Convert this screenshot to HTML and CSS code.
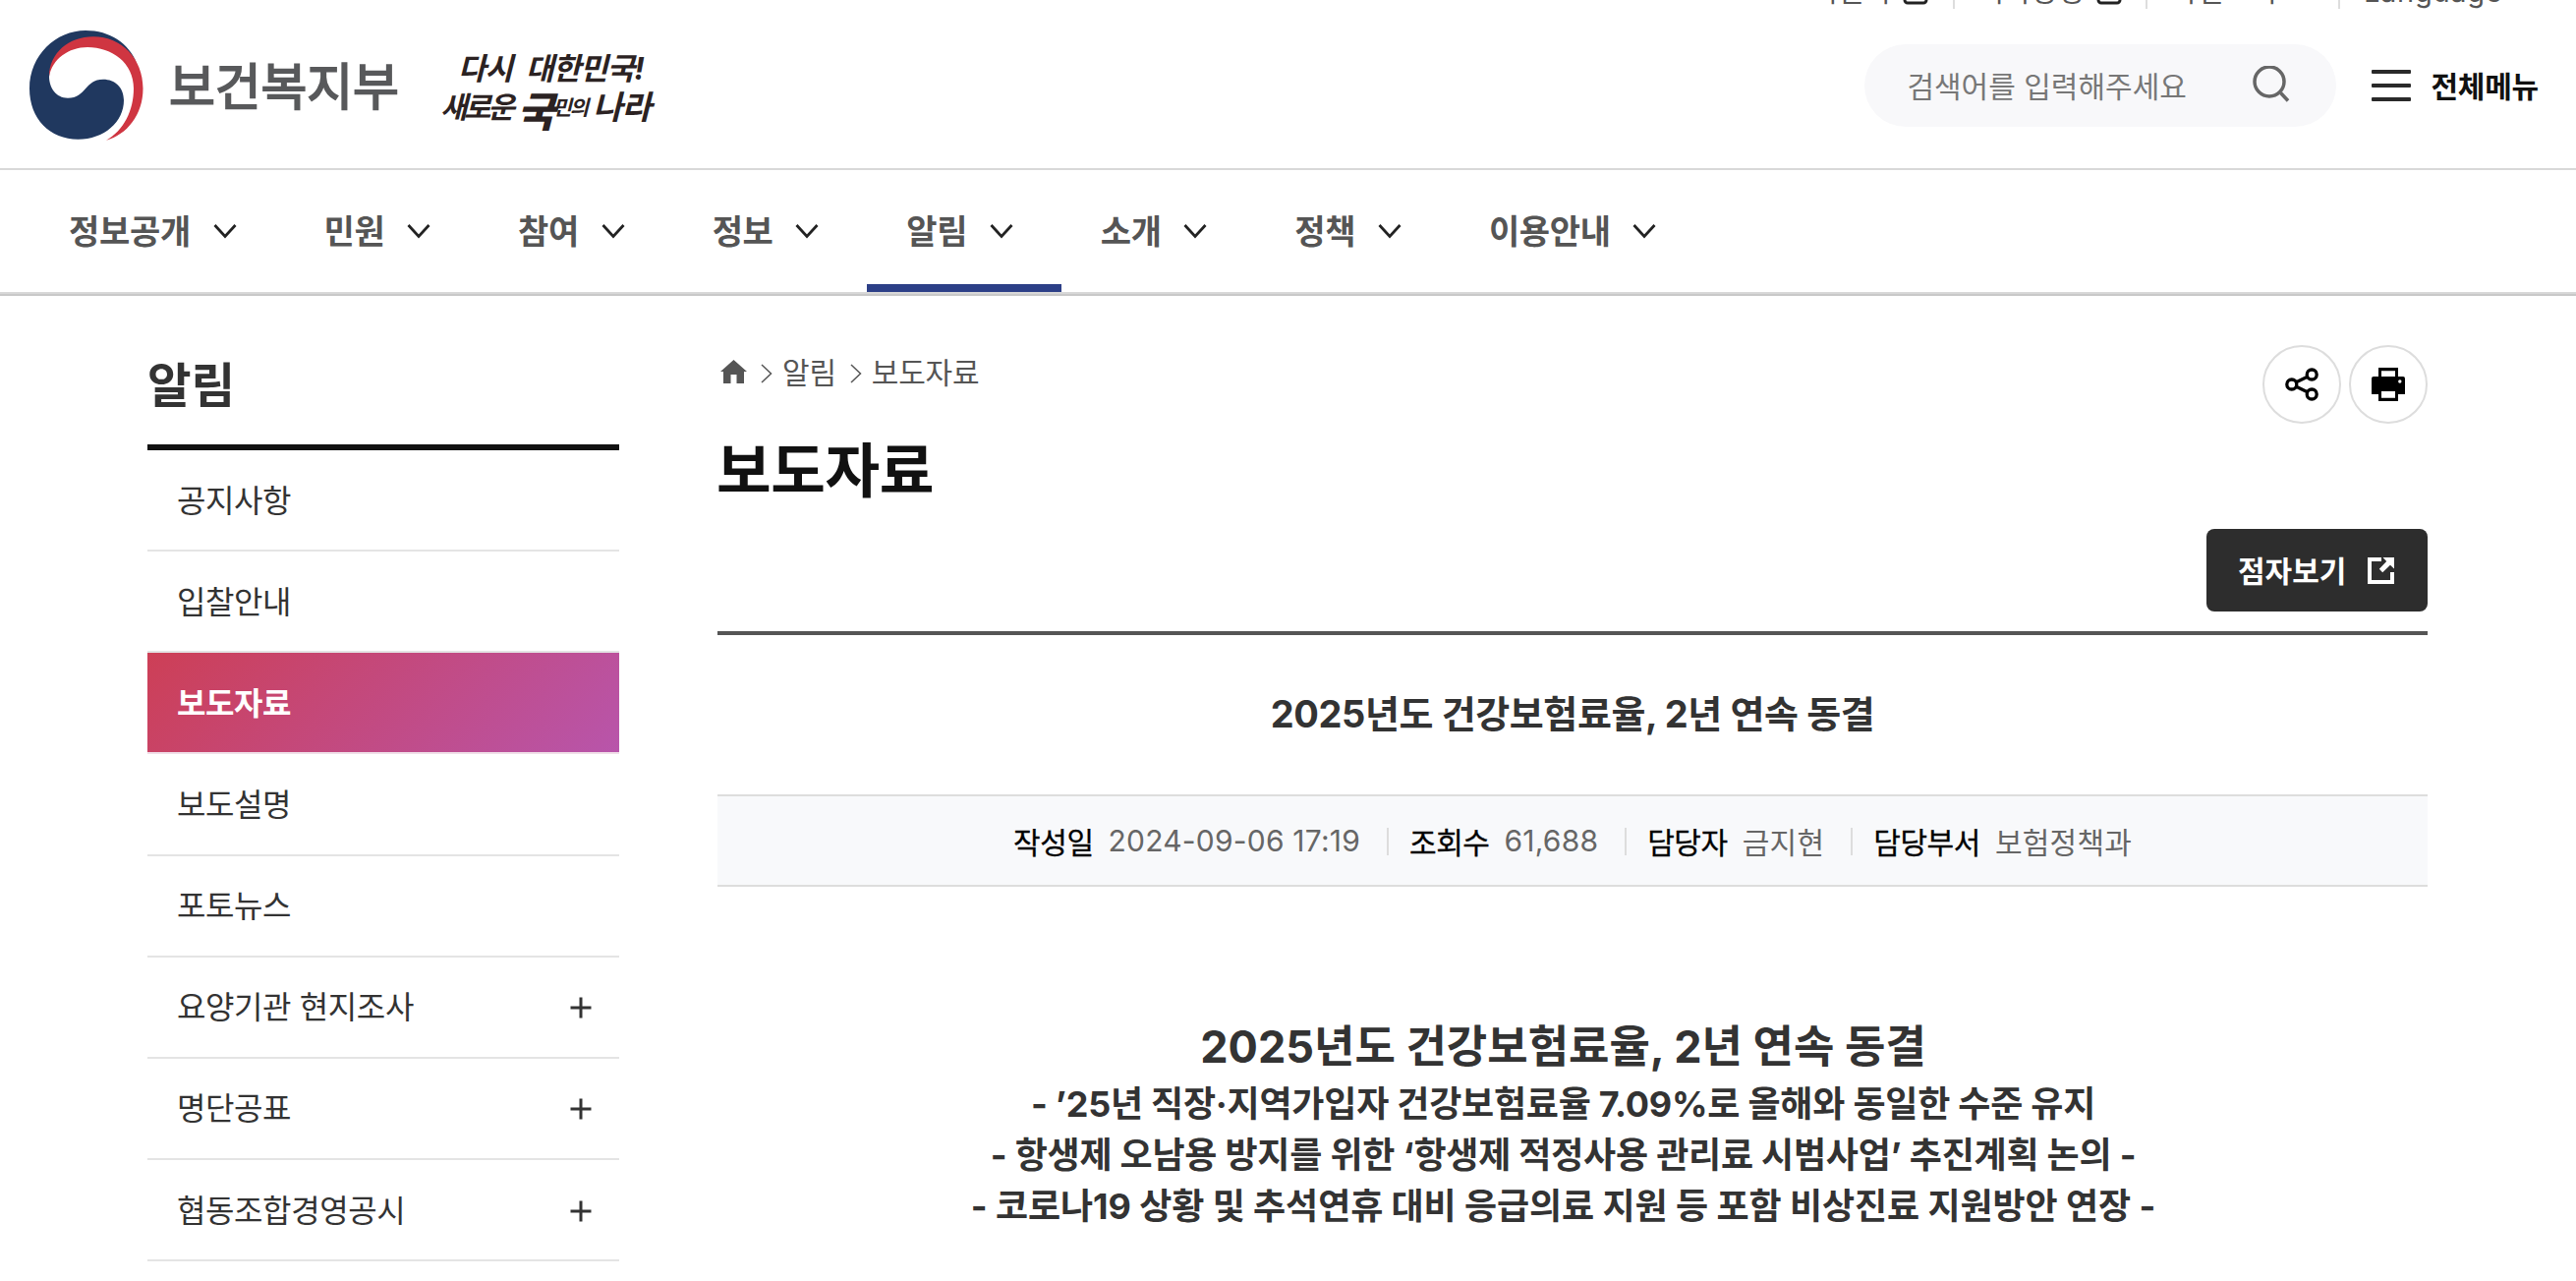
FILE: index.html
```html
<!DOCTYPE html>
<html lang="ko">
<head>
    <meta charset="UTF-8">
    <meta name="viewport" content="width=device-width, initial-scale=1.0">
    <title>보도자료 | 보건복지부</title>
    <link rel="stylesheet" href="styles.css">
</head>
<body>
    <svg class="sprite" width="0" height="0">
        <symbol id="arrow-down" viewBox="0 0 24 24">
            <path d="M1.5 6 L12 17.5 L22.5 6" fill="none" stroke="#222" stroke-width="2.8"/>
        </symbol>
        <symbol id="arrow-right" viewBox="0 0 12 20">
            <path d="M1 1 L10.5 10 L1 19" fill="none" stroke="#555" stroke-width="1.5"/>
        </symbol>
        <symbol id="plus" viewBox="0 0 22 22">
            <path d="M11 0.5 V21.5 M0.5 11 H21.5" fill="none" stroke="#333" stroke-width="3"/>
        </symbol>
        <symbol id="box" viewBox="0 0 26 26">
            <path d="M12 2 H5 a3 3 0 0 0 -3 3 V21 a3 3 0 0 0 3 3 H21 a3 3 0 0 0 3 -3 V14" fill="none" stroke="#222" stroke-width="3"/>
        </symbol>
    </svg>

    <header class="header">
        <ul class="util">
            <li class="first">어린이 <svg><use href="#box"/></svg></li>
            <li>국가상징 <svg><use href="#box"/></svg></li>
            <li>화면크기</li>
            <li class="lang">Language</li>
        </ul>

        <div class="brand">
            <svg class="emblem" viewBox="30 31 116 112">
                <path fill="#20385f" d="M87 31 C57 31 30 56 30 90 C30 121 51 141.7 79.5 141.7 C106 141.7 126 124 126 102 C126 89 117 80.7 105 80.7 C86 80.7 88 99.7 69 99.7 C57 99.7 50 89 50 78 C52 54 72 38 95 38 C115 38 129 48 139 64 C131 44 112 31 87 31Z"/>
                <path fill="#cf3541" d="M50 78 C50 54 70 37.3 95 37.3 C124 37.3 145.5 60 145.5 90 C145.5 117 129 137 108 142.7 C126 133 136 112 136 90 C136 64 114 48 89 48 C70 48 53 60 50 78Z"/>
            </svg>
            <span class="brand-name">보건복지부</span>
            <div class="slogan">
                <p class="slogan-top"><span>다시</span><span>대한민국!</span></p>
                <p class="slogan-bottom"><span>새로운</span><b>국</b><small>민의</small><span>나라</span></p>
            </div>
        </div>

        <div class="tools">
            <div class="search">
                <span>검색어를 입력해주세요</span>
                <svg viewBox="0 0 38 38">
                    <circle cx="17" cy="16" r="15" fill="none" stroke="#666" stroke-width="3.5"/>
                    <path d="M28.5 27.5 L36 35.5" stroke="#666" stroke-width="3.5"/>
                </svg>
            </div>
            <div class="all-menu">
                <span class="bars"><i></i><i></i><i></i></span>
                <strong>전체메뉴</strong>
            </div>
        </div>
    </header>

    <nav class="gnb">
        <a>정보공개 <svg><use href="#arrow-down"/></svg></a>
        <a>민원 <svg><use href="#arrow-down"/></svg></a>
        <a>참여 <svg><use href="#arrow-down"/></svg></a>
        <a>정보 <svg><use href="#arrow-down"/></svg></a>
        <a class="on">알림 <svg><use href="#arrow-down"/></svg></a>
        <a>소개 <svg><use href="#arrow-down"/></svg></a>
        <a>정책 <svg><use href="#arrow-down"/></svg></a>
        <a>이용안내 <svg><use href="#arrow-down"/></svg></a>
    </nav>

    <div class="container">
        <aside class="side">
            <h2>알림</h2>
            <ul>
                <li>공지사항</li>
                <li>입찰안내</li>
                <li class="on">보도자료</li>
                <li>보도설명</li>
                <li>포토뉴스</li>
                <li>요양기관 현지조사 <svg><use href="#plus"/></svg></li>
                <li>명단공표 <svg><use href="#plus"/></svg></li>
                <li>협동조합경영공시 <svg><use href="#plus"/></svg></li>
            </ul>
        </aside>

        <main class="content">
            <div class="page-head">
                <div>
                    <div class="breadcrumb">
                        <svg class="home" viewBox="0 0 27 24">
                            <path fill="#555" d="M13.5 0 L27 12 H24 V24 H16.5 V15 H10.5 V24 H3 V12 H0Z"/>
                        </svg>
                        <svg class="sep"><use href="#arrow-right"/></svg>
                        <span>알림</span>
                        <svg class="sep"><use href="#arrow-right"/></svg>
                        <span>보도자료</span>
                    </div>
                    <h1>보도자료</h1>
                </div>
                <div class="actions">
                    <button class="round">
                        <svg viewBox="0 0 34 34" fill="none" stroke="#000" stroke-width="3.3">
                            <circle cx="6.8" cy="17" r="5"/>
                            <circle cx="27.2" cy="7" r="5"/>
                            <circle cx="27.2" cy="27" r="5"/>
                            <path d="M11.3 14.8 L22.7 9.2 M11.3 19.2 L22.7 24.8"/>
                        </svg>
                    </button>
                    <button class="round">
                        <svg viewBox="0 0 34 34">
                            <path fill="#000" fill-rule="evenodd" d="M7 0 H27 V9 H32 Q34 9 34 11 V27 H27 V34 H7 V27 H0 V11 Q0 9 2 9 H7Z M10 3.3 V9 H24 V3.3Z M10 24 V30.7 H24 V24Z"/>
                            <circle cx="28.8" cy="14" r="1.7" fill="#fff"/>
                        </svg>
                    </button>
                </div>
            </div>

            <div class="btn-row">
                <button class="braille">점자보기
                    <svg viewBox="0 0 27 27">
                        <path d="M14 2 H2 V25 H25 V15" fill="none" stroke="#fff" stroke-width="4"/>
                        <path d="M15.5 0 H27 V11.5 L23 7.8 L15.2 15.2 L11.8 11.8 L19.2 4Z" fill="#fff"/>
                    </svg>
                </button>
            </div>

            <article class="article">
                <h3>2025년도 건강보험료율, 2년 연속 동결</h3>
                <dl class="meta">
                    <div><dt>작성일</dt><dd>2024-09-06 17:19</dd></div>
                    <div><dt>조회수</dt><dd>61,688</dd></div>
                    <div><dt>담당자</dt><dd>금지현</dd></div>
                    <div><dt>담당부서</dt><dd>보험정책과</dd></div>
                </dl>
                <div class="article-body">
                    <p class="lead">2025년도 건강보험료율, 2년 연속 동결</p>
                    <p>- ’25년 직장·지역가입자 건강보험료율 7.09%로 올해와 동일한 수준 유지</p>
                    <p>- 항생제 오남용 방지를 위한 ‘항생제 적정사용 관리료 시범사업’ 추진계획 논의 -</p>
                    <p class="wide">- 코로나19 상황 및 추석연휴 대비 응급의료 지원 등 포함 비상진료 지원방안 연장 -</p>
                </div>
            </article>
        </main>
    </div>
</body>
</html>
```
FILE: styles.css
```css
* {
    margin: 0;
    padding: 0;
    box-sizing: border-box;
}

body {
    font-family: Inter, "Noto Sans CJK KR", sans-serif;
    background: #fff;
    color: #333;
    height: 1303px;
    overflow: hidden;
}

ul {
    list-style: none;
}

svg {
    display: block;
    flex-shrink: 0;
}

.sprite {
    position: absolute;
}

button {
    font-family: inherit;
    cursor: pointer;
}

/* header */
.header {
    position: relative;
    height: 173px;
    border-bottom: 2px solid #d8d8d8;
    display: flex;
    justify-content: space-between;
    padding: 0 38px 0 30px;
}

.util {
    position: absolute;
    top: -28px;
    right: 77px;
    display: flex;
    font-size: 29px;
    line-height: 40px;
    letter-spacing: 0.3px;
    color: #555;
}

.util li {
    width: 196px;
    display: flex;
    align-items: center;
    white-space: nowrap;
}

.util li.first {
    width: auto;
    padding-right: 25px;
}

.util li.lang {
    width: 165px;
    letter-spacing: 0.7px;
}

.util li + li::before {
    content: "";
    flex-shrink: 0;
    width: 2px;
    height: 20px;
    margin: 14px 24px 0 0;
    background: #ddd;
}

.util svg {
    width: 26px;
    height: 26px;
    margin-left: 12px;
}

.brand {
    display: flex;
    padding-top: 31px;
}

.emblem {
    width: 116px;
    height: 112px;
}

.brand-name {
    margin: 22px 0 0 26px;
    width: 276px;
    font-size: 51px;
    line-height: 72px;
    letter-spacing: -0.2px;
    color: #58595b;
    -webkit-text-stroke: 1.8px #58595b;
}

.slogan {
    padding-top: 16px;
    font-weight: 700;
    font-style: italic;
    color: #2b2222;
    white-space: nowrap;
}

.slogan p {
    display: flex;
    align-items: center;
    height: 40px;
}

.slogan-top {
    padding-left: 18px;
    gap: 14px;
    font-size: 31px;
    letter-spacing: -1px;
}

.slogan-bottom {
    font-size: 30px;
    letter-spacing: -3.5px;
}

.slogan b {
    margin: 6px 0 0 6px;
    font-size: 42px;
}

.slogan small {
    font-size: 21px;
    letter-spacing: -2px;
    margin: 2px 6px 0 1px;
}

.slogan-bottom span:last-child {
    font-size: 33px;
    letter-spacing: -1px;
}

.tools {
    display: flex;
    padding-top: 45px;
}

.search {
    width: 480px;
    height: 84px;
    border-radius: 42px;
    background: #f8f8fa;
    display: flex;
    align-items: center;
    justify-content: space-between;
    padding: 0 47px 3px 43px;
    font-size: 30px;
    letter-spacing: 0;
    color: #777;
}

.search svg {
    width: 38px;
    height: 38px;
}

.all-menu {
    height: 84px;
    margin-left: 36px;
    display: flex;
    align-items: center;
    font-size: 30px;
    letter-spacing: -0.2px;
    color: #111;
}

.all-menu strong {
    padding-bottom: 3px;
}

.bars {
    width: 40px;
    margin-right: 20px;
    display: grid;
    gap: 10px;
}

.bars i {
    height: 4px;
    border-radius: 1px;
    background: #2a2a2a;
}

/* main menu */
.gnb {
    height: 128px;
    padding-left: 30px;
    display: flex;
    border-bottom: 2px solid #c8c8c8;
    box-shadow: inset 0 -2px #d8d8d8;
}

.gnb a {
    height: 124px;
    padding: 0 49px 4px 40px;
    display: flex;
    align-items: center;
    font-size: 34px;
    font-weight: 700;
    letter-spacing: -0.3px;
    color: #555;
}

.gnb svg {
    width: 24px;
    height: 24px;
    margin: 4px 0 0 22.6px;
}

.gnb a.on {
    box-shadow: inset 0 -8px #2c3f87;
}

/* layout */
.container {
    width: 2320px;
    margin-left: 150px;
    display: flex;
    justify-content: space-between;
}

.side {
    width: 480px;
}

.side h2 {
    height: 157px;
    padding-top: 56px;
    border-bottom: 6px solid #111;
    font-size: 48.5px;
    line-height: 72px;
    color: #333;
}

.side li {
    height: 103.15px;
    padding: 0 28px 4px 30px;
    border-bottom: 2px solid #e4e4e4;
    display: flex;
    align-items: center;
    justify-content: space-between;
    font-size: 32px;
    letter-spacing: -0.4px;
}

.side svg {
    width: 22px;
    height: 22px;
    margin-top: 6px;
}

.side li.on {
    background: linear-gradient(135deg, #cd3f56, #b855ab) padding-box;
    border-color: #f0dfe8;
    color: #fff;
    font-weight: 700;
}

/* content */
.content {
    width: 1740px;
}

.page-head {
    height: 237px;
    padding-top: 50px;
    display: flex;
    justify-content: space-between;
}

.breadcrumb {
    height: 54px;
    display: flex;
    align-items: center;
    font-size: 30px;
    letter-spacing: -0.2px;
    color: #555;
}

.breadcrumb span {
    padding-bottom: 3px;
}

.home {
    width: 27px;
    height: 24px;
    margin-left: 3px;
}

.sep {
    width: 12px;
    height: 20px;
    margin: 4px 10px 0 14px;
}

.content h1 {
    margin: 28px 0 0 -1px;
    font-size: 60.5px;
    line-height: 92px;
    letter-spacing: -0.4px;
    color: #111;
}

.actions {
    display: flex;
    gap: 8px;
}

.round {
    width: 80px;
    height: 80px;
    border: 2px solid #ddd;
    border-radius: 50%;
    background: #fff;
    display: flex;
    align-items: center;
    justify-content: center;
}

.round svg {
    width: 34px;
    height: 34px;
}

.btn-row {
    height: 104px;
    display: flex;
    justify-content: flex-end;
}

.braille {
    width: 225px;
    height: 84px;
    border: 0;
    border-radius: 8px;
    background: #2d2d2d;
    color: #fff;
    font-size: 30px;
    font-weight: 700;
    letter-spacing: 0;
    padding: 0 34px 3px 32px;
    display: flex;
    align-items: center;
    justify-content: space-between;
}

.braille svg {
    width: 27px;
    height: 27px;
    margin-top: 3px;
}

.article {
    border-top: 4px solid #555;
}

.article h3 {
    height: 162px;
    text-align: center;
    font-size: 38px;
    line-height: 161px;
    letter-spacing: -0.4px;
}

.meta {
    height: 94px;
    padding-bottom: 1px;
    border-top: 2px solid #ddd;
    border-bottom: 2px solid #ddd;
    background: #f8f9fb;
    display: flex;
    align-items: center;
    justify-content: center;
    font-size: 30px;
}

.meta div {
    display: flex;
    align-items: center;
    gap: 15px;
}

.meta div + div::before {
    content: "";
    width: 2px;
    height: 28px;
    margin: 2px 6px 0 27px;
    background: #ddd;
}

.meta dt {
    color: #000;
    letter-spacing: -0.4px;
    -webkit-text-stroke: 0.3px #000;
}

.meta dd {
    color: #666;
    letter-spacing: 0.2px;
}

.article-body {
    padding: 133px 19px 0 0;
    text-align: center;
    font-size: 36px;
    line-height: 52px;
    font-weight: 700;
    letter-spacing: -0.24px;
    white-space: nowrap;
}

.article-body .lead {
    margin-bottom: 2px;
    font-size: 45px;
    line-height: 60px;
    letter-spacing: 0;
}

.article-body .wide {
    letter-spacing: -0.1px;
}
```
